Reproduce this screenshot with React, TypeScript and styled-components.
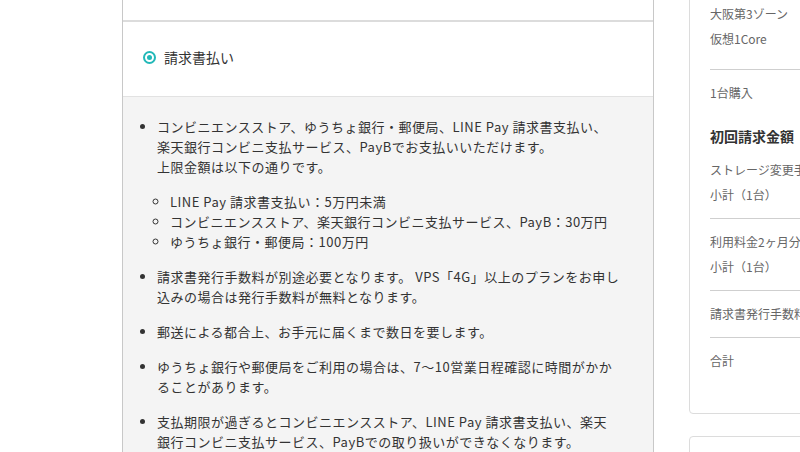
import styled, { createGlobalStyle } from 'styled-components';

const GlobalStyle = createGlobalStyle`
  html, body {
    margin: 0;
    padding: 0;
    background: #fff;
    overflow: hidden;
  }
  body {
    font-family: "Noto Sans CJK JP", "Liberation Sans", sans-serif;
    color: #333;
  }
`;

const Page = styled.div`
  display: flex;
  align-items: flex-start;
  gap: 35px;
  padding-left: 122px;
  width: 800px;
  height: 452px;
  box-sizing: border-box;
  overflow: hidden;
`;

const MethodPanel = styled.section`
  flex: 0 0 532px;
  box-sizing: border-box;
  border-left: 1px solid #c8c8c8;
  border-right: 1px solid #c8c8c8;
  min-height: 600px;
`;

const PrevOption = styled.div`
  height: 20px;
  border-bottom: 2px solid #dcdcdc;
`;

const OptionRow = styled.label`
  display: flex;
  align-items: center;
  gap: 8px;
  height: 75px;
  box-sizing: border-box;
  padding: 0 0 5px 20px;
  border-bottom: 1px solid #e2e2e2;
  font-size: 14px;
  color: #333;
`;

const Radio = styled.span<{ checked: boolean }>`
  width: 13px;
  height: 13px;
  box-sizing: border-box;
  border-radius: 50%;
  border: 2px solid #22b8b8;
  display: flex;
  align-items: center;
  justify-content: center;
  margin-top: 2px;

  &::after {
    content: '';
    width: 5px;
    height: 5px;
    border-radius: 50%;
    background: #22b8b8;
    display: ${p => (p.checked ? 'block' : 'none')};
  }
`;

const Details = styled.div`
  background: #f4f4f4;
  padding: 20px 16px 40px 0;
  min-height: 400px;
`;

const NoteList = styled.ul`
  margin: 0;
  padding-left: 34px;
  list-style: disc;
  font-size: 13px;
  line-height: 20px;
  letter-spacing: 0.5px;
  color: #333;

  & > li + li {
    margin-top: 15px;
  }
`;

const Note = styled.li`
  white-space: nowrap;
`;

const LimitList = styled.ul`
  margin: 15px 0 0;
  padding-left: 13px;
  list-style: circle;
`;

const Summary = styled.aside`
  flex: 0 0 240px;
  display: flex;
  flex-direction: column;
  gap: 22px;
`;

const Card = styled.div<{ clipped?: boolean }>`
  box-sizing: border-box;
  border: 1px solid #dcdcdc;
  border-radius: 4px;
  padding: ${p => (p.clipped ? '30px 20px 40px' : '20px')};
  margin-top: ${p => (p.clipped ? '-30px' : '0')};
  min-height: 60px;
`;

const Group = styled.div<{ divided?: boolean; top?: number; bottom?: number }>`
  padding-top: ${p => p.top ?? 10}px;
  padding-bottom: ${p => p.bottom ?? 11}px;
  border-bottom: ${p => (p.divided ? '1px solid #cfcfcf' : 'none')};
`;

const Row = styled.div`
  font-size: 12px;
  line-height: 25px;
  color: #666;
  white-space: nowrap;
`;

const Heading = styled.div`
  font-size: 14px;
  font-weight: 700;
  line-height: 25px;
  color: #333;
  margin-bottom: -1px;
`;

export default function App() {
  return (
    <>
      <GlobalStyle />
      <Page>
        <MethodPanel>
          <PrevOption />
          <OptionRow>
            <Radio checked />
            <span>請求書払い</span>
          </OptionRow>
          <Details>
            <NoteList>
              <Note>
                コンビニエンスストア、ゆうちょ銀行・郵便局、LINE Pay 請求書支払い、
                <br />
                楽天銀行コンビニ支払サービス、PayBでお支払いいただけます。
                <br />
                上限金額は以下の通りです。
                <LimitList>
                  <li>LINE Pay 請求書支払い：5万円未満</li>
                  <li>コンビニエンスストア、楽天銀行コンビニ支払サービス、PayB：30万円</li>
                  <li>ゆうちょ銀行・郵便局：100万円</li>
                </LimitList>
              </Note>
              <Note>
                請求書発行手数料が別途必要となります。 VPS「4G」以上のプランをお申し
                <br />
                込みの場合は発行手数料が無料となります。
              </Note>
              <Note>郵送による都合上、お手元に届くまで数日を要します。</Note>
              <Note>
                ゆうちょ銀行や郵便局をご利用の場合は、7〜10営業日程確認に時間がかか
                <br />
                ることがあります。
              </Note>
              <Note>
                支払期限が過ぎるとコンビニエンスストア、LINE Pay 請求書支払い、楽天
                <br />
                銀行コンビニ支払サービス、PayBでの取り扱いができなくなります。
              </Note>
            </NoteList>
          </Details>
        </MethodPanel>

        <Summary>
          <Card clipped>
            <Group divided top={0} bottom={18}>
              <Row>大阪第3ゾーン</Row>
              <Row>仮想1Core</Row>
            </Group>
            <Group top={10} bottom={19}>
              <Row>1台購入</Row>
            </Group>
            <Heading>初回請求金額</Heading>
            <Group divided top={9}>
              <Row>ストレージ変更手数料</Row>
              <Row>小計（1台）</Row>
            </Group>
            <Group divided>
              <Row>利用料金2ヶ月分</Row>
              <Row>小計（1台）</Row>
            </Group>
            <Group divided>
              <Row>請求書発行手数料</Row>
            </Group>
            <Group top={10} bottom={0}>
              <Row>合計</Row>
            </Group>
          </Card>
          <Card />
        </Summary>
      </Page>
    </>
  );
}
